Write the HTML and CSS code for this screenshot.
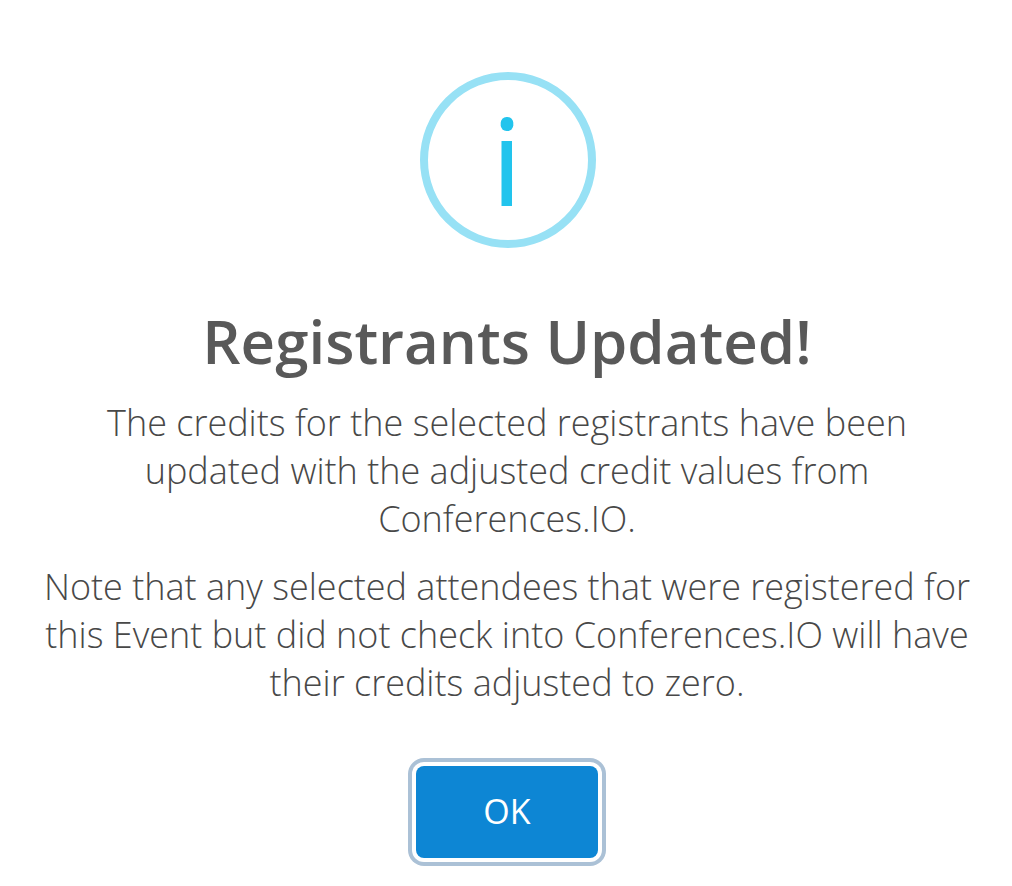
FILE: index.html
```html
<!DOCTYPE html>
<html lang="en">
<head>
  <meta charset="UTF-8" />
  <meta name="viewport" content="width=device-width, initial-scale=1" />
  <title>Registrants Updated!</title>
  <link rel="stylesheet" href="styles.css">
</head>
<body>
  <div class="modal" role="alertdialog" aria-labelledby="modal-title" aria-describedby="modal-text">
    <svg class="modal-icon" viewBox="0 0 176 176" aria-hidden="true">
      <circle cx="88" cy="88" r="84" fill="none" stroke="#97e1f5" stroke-width="8" />
      <rect x="80.7" y="45" width="12.6" height="14" rx="5.8" fill="#22c4ed" />
      <rect x="81.5" y="69" width="10.5" height="65" fill="#22c4ed" />
    </svg>

    <h1 class="modal-title" id="modal-title">Registrants Updated!</h1>

    <div class="modal-text" id="modal-text">
      <p>The credits for the selected registrants have been updated with the adjusted credit values from Conferences.IO.</p>
      <p>Note that any selected attendees that were registered for this Event but did not check into Conferences.IO will have their credits adjusted to zero.</p>
    </div>

    <button class="ok-btn" type="button">OK</button>
  </div>
</body>
</html>
```
FILE: styles.css
```css
body {
  font-family: "Open Sans", sans-serif;
  margin: 0;
  color: #595959;
  background: #fff;
}
.modal {
  display: flex;
  flex-direction: column;
  align-items: center;
  padding: 72px 40px 20px 42px;
  text-align: center;
}
.modal-icon {
  width: 176px;
  height: 176px;
  margin-left: 2px;
}
.modal-title {
  margin: 51px 0 16px;
  font-size: 60px;
  font-weight: 600;
  line-height: 84px;
}
.modal-text {
  color: #484848;
  font-size: 36px;
  font-weight: 300;
  line-height: 48px;
}
.modal-text p {
  margin: 0 0 20px;
}
.ok-btn {
  margin-top: 39px;
  padding: 21px 67px 23px;
  border: none;
  border-radius: 8px;
  background: #0d86d4;
  box-shadow: 0 0 0 4px #fff, 0 0 0 8px #abc1d6;
  color: #fff;
  font-family: inherit;
  font-size: 34px;
  font-weight: 500;
  line-height: 48px;
  cursor: pointer;
}
```
